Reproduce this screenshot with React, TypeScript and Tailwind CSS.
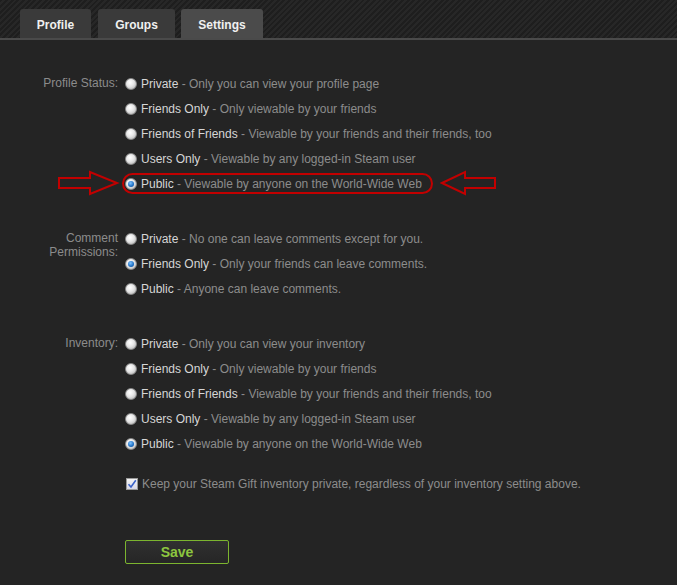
import React from "react";

type Opt = { name: string; desc: string; checked?: boolean };

function Radio({ checked }: { checked?: boolean }) {
  return (
    <span className="relative flex h-[12px] w-[12px] shrink-0 items-center justify-center rounded-full border border-[#8a8a8a] bg-[radial-gradient(circle_at_40%_35%,#ffffff_0%,#e6e6e6_45%,#a9a9a9_100%)]">
      {checked && (
        <span className="h-[6px] w-[6px] rounded-full bg-[radial-gradient(circle_at_40%_35%,#7fc3ff_0%,#1d6fc4_60%,#0b3f80_100%)]" />
      )}
    </span>
  );
}

function Row({ o }: { o: Opt }) {
  return (
    <div className="flex h-[25px] items-center gap-[4px]">
      <Radio checked={o.checked} />
      <span className="whitespace-nowrap text-[12px] text-[#8c8c8c]">
        <span className="text-[#d6d6d6]">{o.name}</span> - {o.desc}
      </span>
    </div>
  );
}

function Section({ label, opts, mb }: { label: React.ReactNode; opts: Opt[]; mb: string }) {
  return (
    <div className={`flex ${mb}`}>
      <div className="w-[119px] shrink-0 pr-[1px] pt-[5px] text-right text-[12px] leading-[14px] text-[#8c8c8c]">
        {label}
      </div>
      <div className="ml-[6px] flex flex-col">
        {opts.map((o, i) => (
          <Row key={i} o={o} />
        ))}
      </div>
    </div>
  );
}

export default function App() {
  const profile: Opt[] = [
    { name: "Private", desc: "Only you can view your profile page" },
    { name: "Friends Only", desc: "Only viewable by your friends" },
    { name: "Friends of Friends", desc: "Viewable by your friends and their friends, too" },
    { name: "Users Only", desc: "Viewable by any logged-in Steam user" },
    { name: "Public", desc: "Viewable by anyone on the World-Wide Web", checked: true },
  ];
  const comments: Opt[] = [
    { name: "Private", desc: "No one can leave comments except for you." },
    { name: "Friends Only", desc: "Only your friends can leave comments.", checked: true },
    { name: "Public", desc: "Anyone can leave comments." },
  ];
  const inventory: Opt[] = [
    { name: "Private", desc: "Only you can view your inventory" },
    { name: "Friends Only", desc: "Only viewable by your friends" },
    { name: "Friends of Friends", desc: "Viewable by your friends and their friends, too" },
    { name: "Users Only", desc: "Viewable by any logged-in Steam user" },
    { name: "Public", desc: "Viewable by anyone on the World-Wide Web", checked: true },
  ];

  return (
    <div className="relative h-[585px] w-[677px] overflow-hidden bg-[#242424] font-['Liberation_Sans',Arial,sans-serif]">
      <div className="flex h-[38px] items-end gap-[7px] bg-[repeating-linear-gradient(135deg,#1e1e1e_0px,#1e1e1e_2px,#272727_2px,#272727_4px)] pl-[20px]">
        <div className="flex h-[29px] w-[71px] items-center justify-center rounded-t-[3px] bg-[#3a3a3a] pt-[3px] text-[12px] font-bold text-[#f0f0f0]">
          Profile
        </div>
        <div className="flex h-[29px] w-[77px] items-center justify-center rounded-t-[3px] bg-[#3a3a3a] pt-[3px] text-[12px] font-bold text-[#f0f0f0]">
          Groups
        </div>
        <div className="ml-[-1px] flex h-[29px] w-[82px] items-center justify-center rounded-t-[3px] bg-[#4b4b4b] pt-[3px] text-[12px] font-bold text-[#f0f0f0]">
          Settings
        </div>
      </div>
      <div className="h-[2px] bg-[#4a4a4a]" />
      <div className="flex flex-col pt-[31px]">
        <Section label="Profile Status:" opts={profile} mb="mb-[30px]" />
        <Section
          label={
            <>
              Comment
              <br />
              Permissions:
            </>
          }
          opts={comments}
          mb="mb-[30px]"
        />
        <Section label="Inventory:" opts={inventory} mb="mb-[15px]" />
        <div className="ml-[126px] flex h-[25px] items-center gap-[4px]">
          <span className="flex h-[12px] w-[12px] items-center justify-center border border-[#9a9a9a] bg-[linear-gradient(#f4f4f4,#d8d8e8)]">
            <svg width="10" height="10" viewBox="0 0 10 10">
              <path d="M1.5 5.2 L4 8 L8.8 1.2" fill="none" stroke="#3a62c8" strokeWidth="1.6" />
            </svg>
          </span>
          <span className="whitespace-nowrap text-[12px] text-[#8c8c8c]">
            Keep your Steam Gift inventory private, regardless of your inventory setting above.
          </span>
        </div>
        <div className="ml-[125px] mt-[44px] flex h-[24px] w-[104px] items-center justify-center rounded-[2px] border border-[#7cb52f] bg-[linear-gradient(#303030,#262626)] text-[14px] font-bold text-[#8cc63f]">
          Save
        </div>
      </div>

      <div className="pointer-events-none absolute left-[122px] top-[173px] h-[21px] w-[311px] rounded-full border-2 border-[#c20000]" />
      <svg className="pointer-events-none absolute left-[56px] top-[170px]" width="64" height="27" viewBox="0 0 64 27">
        <polygon points="3,8 34,8 34,2 61,13 34,24 34,18 3,18" fill="none" stroke="#c20000" strokeWidth="2" />
      </svg>
      <svg className="pointer-events-none absolute left-[440px] top-[170px]" width="58" height="27" viewBox="0 0 58 27">
        <polygon points="2,13 25,2 25,8 55,8 55,18 25,18 25,24" fill="none" stroke="#c20000" strokeWidth="2" />
      </svg>
    </div>
  );
}
